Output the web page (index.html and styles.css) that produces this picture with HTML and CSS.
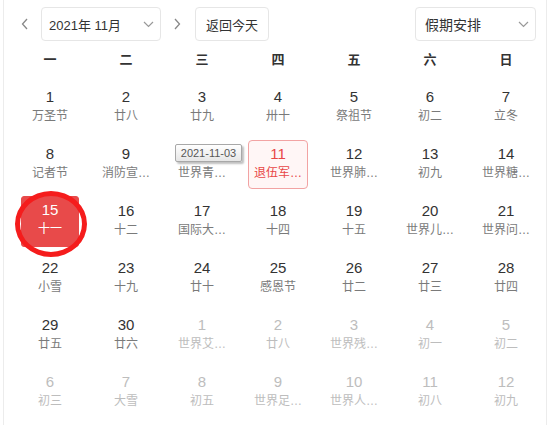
FILE: index.html
```html
<!DOCTYPE html>
<html lang="zh-CN">
<head>
<meta charset="utf-8">
<title>日历</title>
<link rel="stylesheet" href="styles.css">
</head>
<body>
<div class="calendar">
  <div class="toolbar">
    <span class="nav-btn"><svg width="8" height="12" viewBox="0 0 8 12"><path d="M6 1 L1.5 6 L6 11" fill="none" stroke="#888" stroke-width="1.3"/></svg></span>
    <div class="select month-select"><span>2021年 11月</span><svg class="chev" width="11" height="7" viewBox="0 0 11 7"><path d="M1 1 L5.5 5.5 L10 1" fill="none" stroke="#999" stroke-width="1.2"/></svg></div>
    <span class="nav-btn"><svg width="8" height="12" viewBox="0 0 8 12"><path d="M2 1 L6.5 6 L2 11" fill="none" stroke="#888" stroke-width="1.3"/></svg></span>
    <div class="btn">返回今天</div>
    <div class="select holiday-select"><span>假期安排</span><svg class="chev" width="11" height="7" viewBox="0 0 11 7"><path d="M1 1 L5.5 5.5 L10 1" fill="none" stroke="#999" stroke-width="1.2"/></svg></div>
  </div>
  <div class="weekdays">
    <span>一</span><span>二</span><span>三</span><span>四</span><span>五</span><span>六</span><span>日</span>
  </div>
  <div class="grid">
    <div class="cell"><div class="box"><b>1</b><i>万圣节</i></div></div>
    <div class="cell"><div class="box"><b>2</b><i>廿八</i></div></div>
    <div class="cell"><div class="box"><b>3</b><i>廿九</i></div></div>
    <div class="cell"><div class="box"><b>4</b><i>卅十</i></div></div>
    <div class="cell"><div class="box"><b>5</b><i>祭祖节</i></div></div>
    <div class="cell"><div class="box"><b>6</b><i>初二</i></div></div>
    <div class="cell"><div class="box"><b>7</b><i>立冬</i></div></div>

    <div class="cell"><div class="box"><b>8</b><i>记者节</i></div></div>
    <div class="cell"><div class="box"><b>9</b><i>消防宣…</i></div></div>
    <div class="cell"><div class="box"><b>10</b><i>世界青…</i></div></div>
    <div class="cell"><div class="box today"><b>11</b><i>退伍军…</i></div></div>
    <div class="cell"><div class="box"><b>12</b><i>世界肺…</i></div></div>
    <div class="cell"><div class="box"><b>13</b><i>初九</i></div></div>
    <div class="cell"><div class="box"><b>14</b><i>世界糖…</i></div></div>

    <div class="cell"><div class="box selected"><b>15</b><i>十一</i></div></div>
    <div class="cell"><div class="box"><b>16</b><i>十二</i></div></div>
    <div class="cell"><div class="box"><b>17</b><i>国际大…</i></div></div>
    <div class="cell"><div class="box"><b>18</b><i>十四</i></div></div>
    <div class="cell"><div class="box"><b>19</b><i>十五</i></div></div>
    <div class="cell"><div class="box"><b>20</b><i>世界儿…</i></div></div>
    <div class="cell"><div class="box"><b>21</b><i>世界问…</i></div></div>

    <div class="cell"><div class="box"><b>22</b><i>小雪</i></div></div>
    <div class="cell"><div class="box"><b>23</b><i>十九</i></div></div>
    <div class="cell"><div class="box"><b>24</b><i>廿十</i></div></div>
    <div class="cell"><div class="box"><b>25</b><i>感恩节</i></div></div>
    <div class="cell"><div class="box"><b>26</b><i>廿二</i></div></div>
    <div class="cell"><div class="box"><b>27</b><i>廿三</i></div></div>
    <div class="cell"><div class="box"><b>28</b><i>廿四</i></div></div>

    <div class="cell"><div class="box"><b>29</b><i>廿五</i></div></div>
    <div class="cell"><div class="box"><b>30</b><i>廿六</i></div></div>
    <div class="cell other"><div class="box"><b>1</b><i>世界艾…</i></div></div>
    <div class="cell other"><div class="box"><b>2</b><i>廿八</i></div></div>
    <div class="cell other"><div class="box"><b>3</b><i>世界残…</i></div></div>
    <div class="cell other"><div class="box"><b>4</b><i>初一</i></div></div>
    <div class="cell other"><div class="box"><b>5</b><i>初二</i></div></div>

    <div class="cell other"><div class="box"><b>6</b><i>初三</i></div></div>
    <div class="cell other"><div class="box"><b>7</b><i>大雪</i></div></div>
    <div class="cell other"><div class="box"><b>8</b><i>初五</i></div></div>
    <div class="cell other"><div class="box"><b>9</b><i>世界足…</i></div></div>
    <div class="cell other"><div class="box"><b>10</b><i>世界人…</i></div></div>
    <div class="cell other"><div class="box"><b>11</b><i>初八</i></div></div>
    <div class="cell other"><div class="box"><b>12</b><i>初九</i></div></div>
  </div>
  <div class="tooltip">2021-11-03</div>
  <div class="mark"></div>
</div>
</body>
</html>
```
FILE: styles.css
```css
html, body {
  margin: 0;
  padding: 0;
  background: #fff;
}
body {
  font-family: "Liberation Sans", "Noto Sans CJK SC", sans-serif;
  color: #333;
}
.calendar {
  position: relative;
  margin-left: 3px;
  width: 542px;
  height: 440px;
  border-left: 1px solid #ececec;
  border-right: 1px solid #ececec;
}
.toolbar {
  display: flex;
  align-items: center;
  padding: 7px 10px 0 13px;
  height: 34px;
}
.nav-btn {
  width: 16px;
  height: 34px;
  display: flex;
  align-items: center;
  justify-content: center;
}
.select {
  box-sizing: border-box;
  height: 34px;
  border: 1px solid #e6e6e6;
  border-radius: 4px;
  display: flex;
  align-items: center;
  justify-content: space-between;
  padding: 0 6px 0 7px;
  font-size: 13px;
  color: #333;
}
.month-select {
  width: 120px;
  margin: 0 8px;
}
.holiday-select {
  width: 121px;
  margin-left: auto;
  font-size: 14px;
  padding-left: 9px;
}
.btn {
  box-sizing: border-box;
  height: 34px;
  width: 74px;
  margin-left: 10px;
  border: 1px solid #e6e6e6;
  border-radius: 4px;
  display: flex;
  align-items: center;
  justify-content: center;
  font-size: 13px;
  color: #333;
}
.weekdays {
  display: grid;
  grid-template-columns: repeat(7, 76px);
  padding-left: 8px;
  margin-top: 2px;
  height: 30px;
  align-items: center;
  font-size: 13px;
  font-weight: bold;
  color: #333;
}
.weekdays span {
  text-align: center;
}
.grid {
  display: grid;
  grid-template-columns: repeat(7, 76px);
  grid-auto-rows: 57px;
  padding-left: 8px;
  margin-top: 6px;
}
.cell {
  display: flex;
  align-items: center;
  justify-content: center;
}
.box {
  box-sizing: border-box;
  width: 60px;
  height: 49px;
  border: 1px solid transparent;
  border-radius: 4px;
  display: flex;
  flex-direction: column;
  align-items: center;
  padding-top: 3px;
}
.box b {
  font-weight: normal;
  font-size: 15px;
  line-height: 20px;
  color: #333;
}
.box i {
  font-style: normal;
  font-size: 12px;
  line-height: 18px;
  color: #7a7a7a;
  white-space: nowrap;
}
.other .box b,
.other .box i {
  color: #bdbdbd;
}
.today {
  border-color: #f2a3a3;
  background: #fff6f6;
}
.today b,
.today i {
  color: #e84646 !important;
}
.selected {
  background: #e84a4a;
  border-color: #e84a4a;
  border-radius: 3px;
  width: 58px;
  height: 51px;
}
.selected b,
.selected i {
  color: #fff !important;
}
.tooltip {
  position: absolute;
  left: 171px;
  top: 144px;
  box-sizing: border-box;
  width: 67px;
  height: 18px;
  border: 1px solid #a8a8a8;
  border-radius: 2px;
  background: linear-gradient(#ffffff, #e6e6e6);
  box-shadow: 2px 2px 2px rgba(0, 0, 0, 0.25);
  font-size: 11px;
  line-height: 16px;
  color: #575757;
  text-align: center;
}
.mark {
  position: absolute;
  left: 11px;
  top: 191px;
  box-sizing: border-box;
  width: 72px;
  height: 66px;
  border: 5px solid #f51c1c;
  border-radius: 50%;
}
```
